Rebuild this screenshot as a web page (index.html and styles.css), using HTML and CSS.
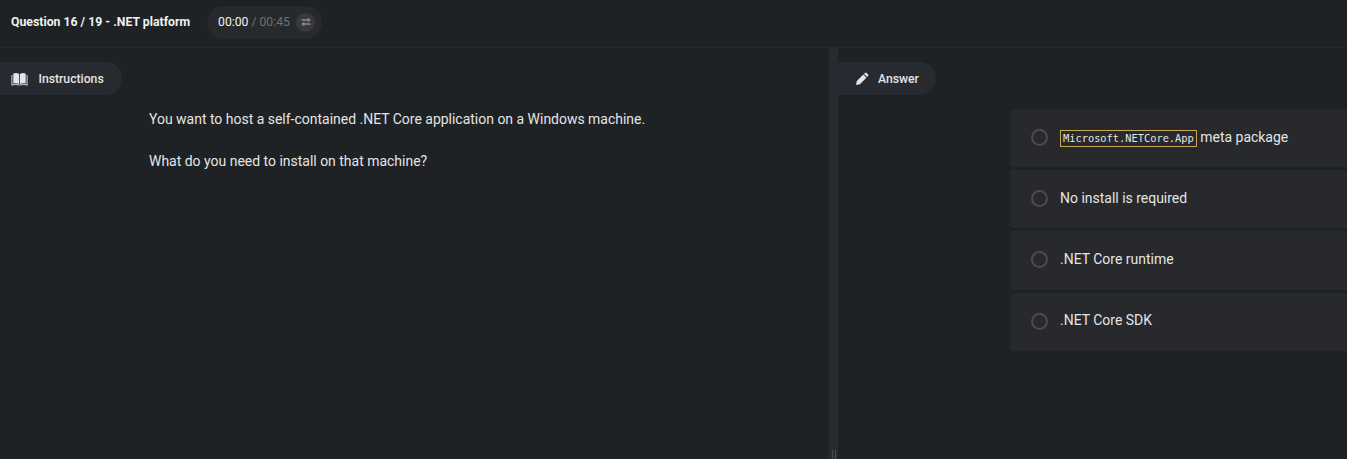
FILE: index.html
```html
<!DOCTYPE html>
<html lang="en">
<head>
<meta charset="utf-8">
<title>Question 16 / 19 - .NET platform</title>
<link rel="stylesheet" href="styles.css">
</head>
<body>
<header class="topbar">
  <h1 class="title">Question 16 / 19 - .NET platform</h1>
  <div class="timer">
    <span class="elapsed">00:00</span><span class="total">/ 00:45</span>
    <span class="swap"><svg width="10" height="10" viewBox="0 0 10 10"><path d="M.5 3h7M2.500 7h7" stroke="currentColor" stroke-width="1.300"/><path d="M6.600.5 9.800 3 6.600 5.500zM3.400 4.500.2 7l3.200 2.500z" fill="currentColor"/></svg></span>
  </div>
</header>
<main class="panes">
  <section class="pane">
    <h2 class="tab"><svg width="17" height="14" viewBox="0 0 17 14"><path d="M2.300 1.500C4.500.5 6.800.8 8.100 2v10.200c-1.500-1-3.700-1.100-5.800-.4zM14.700 1.500C12.500.5 10.200.8 8.900 2v10.200c1.500-1 3.700-1.100 5.800-.4z" fill="currentColor"/><path d="M.9 3v10c2.700-.8 5.300-.8 7 0h1.200c1.700-.8 4.300-.8 7 0V3" fill="none" stroke="currentColor" stroke-width="1.200" opacity=".75"/></svg>Instructions</h2>
    <div class="statement">
      <p>You want to host a self-contained .NET Core application on a Windows machine.</p>
      <p>What do you need to install on that machine?</p>
    </div>
  </section>
  <div class="splitter"><span class="grip"></span></div>
  <section class="pane answer">
    <h2 class="tab"><svg width="14" height="14" viewBox="0 0 14 14"><path d="M1 13l.8-3.900 6.500-6.500 3.100 3.100-6.500 6.500zM9 1.900l.9-.9c.5-.5 1.200-.5 1.700 0L13 2.400c.5.500.5 1.200 0 1.700l-.9.9z" fill="currentColor"/></svg>Answer</h2>
    <ul class="options">
      <li class="option"><span class="radio"></span><span class="label"><code>Microsoft.NETCore.App</code> meta package</span></li>
      <li class="option"><span class="radio"></span><span class="label">No install is required</span></li>
      <li class="option"><span class="radio"></span><span class="label">.NET Core runtime</span></li>
      <li class="option"><span class="radio"></span><span class="label">.NET Core SDK</span></li>
    </ul>
  </section>
</main>
</body>
</html>
```
FILE: styles.css
```css
* { box-sizing: border-box; }
body {
  margin: 0;
  height: 100vh;
  display: flex;
  flex-direction: column;
  overflow: hidden;
  background: #1e2224;
  color: #e4e5e6;
  font: 13.970px/21px Roboto, sans-serif;
}
h1, h2, p, ul { margin: 0; padding: 0; }
svg { display: block; flex: none; }
.topbar {
  flex: none;
  height: 48px;
  padding: 0 0 3px 11px;
  border-bottom: 1px solid #24282b;
  display: flex;
  align-items: center;
  gap: 17px;
}
.title { font-size: 12.270px; line-height: 22px; font-weight: 700; color: #f0f1f1; white-space: nowrap; }
.timer {
  height: 33px;
  width: 115px;
  padding: 0 7px 0 11px;
  border-radius: 17px;
  background: #27292c;
  display: flex;
  align-items: center;
  font-size: 12.200px;
  line-height: 22px;
  white-space: nowrap;
}
.elapsed { color: #f0f1f1; margin-right: 4px; }
.total { color: #6f7173; margin-left: -1px; }
.swap {
  width: 19px;
  height: 19px;
  margin-left: auto;
  border-radius: 50%;
  background: #38393c;
  color: #88898b;
  display: flex;
  align-items: center;
  justify-content: center;
}
.panes { flex: 1; display: flex; min-height: 0; }
.pane { width: 829px; flex: none; padding-top: 14px; }
.answer { width: auto; flex: 1; min-width: 0; }
.tab {
  display: flex;
  align-items: center;
  width: 122px;
  height: 33px;
  padding: 1px 0 0 11px;
  gap: 10.500px;
  border-radius: 0 17px 17px 0;
  background: #272a30;
  font-size: 12.200px;
  font-weight: 500;
}
.answer .tab { width: 98px; padding-left: 17px; gap: 9px; }
.statement { padding: 14px 0 0 149px; }
.statement p + p { margin-top: 21px; }
.splitter {
  width: 9px;
  flex: none;
  background: #272a30;
  display: flex;
  justify-content: center;
  align-items: flex-end;
}
.grip { width: 4px; height: 9px; border: solid #484b50; border-width: 0 1px; }
.options {
  list-style: none;
  margin: 14px 0 0 172px;
  display: grid;
  gap: 3px;
}
.option {
  height: 58.200px;
  padding: 0 0 1px 21px;
  border-radius: 4px 0 0 4px;
  background: #28292c;
  display: flex;
  align-items: center;
  gap: 12px;
}
.label { padding-bottom: 1px; }
.radio { width: 17px; height: 17px; border: 2px solid #4a4b4e; border-radius: 50%; }
code {
  display: inline-block;
  padding: 0 2px;
  border: 1px solid #c9a94f;
  font: 10.350px/15px "DejaVu Sans Mono", monospace;
}
```
